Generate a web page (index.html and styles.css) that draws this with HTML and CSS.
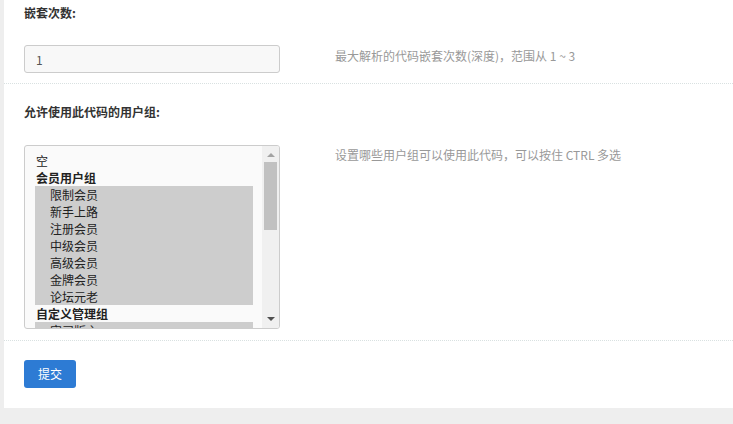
FILE: index.html
```html
<!DOCTYPE html>
<html lang="zh-CN">
<head>
<meta charset="utf-8">
<title>嵌套次数</title>
<link rel="stylesheet" href="styles.css">
</head>
<body>
<div class="panel">
  <div class="row row-first">
    <div class="label">嵌套次数:</div>
    <div class="field">
      <div class="control">
        <input class="input" type="text" value="1" readonly>
      </div>
      <div class="help">最大解析的代码嵌套次数(深度)，范围从 1 ~ 3</div>
    </div>
  </div>
  <div class="row row-second">
    <div class="label">允许使用此代码的用户组:</div>
    <div class="field">
      <div class="control">
        <div class="listbox">
          <div class="list-content">
            <div class="opt">空</div>
            <div class="group">会员用户组</div>
            <div class="opt sub sel">限制会员</div>
            <div class="opt sub sel">新手上路</div>
            <div class="opt sub sel">注册会员</div>
            <div class="opt sub sel">中级会员</div>
            <div class="opt sub sel">高级会员</div>
            <div class="opt sub sel">金牌会员</div>
            <div class="opt sub sel">论坛元老</div>
            <div class="group">自定义管理组</div>
            <div class="opt sub sel">实习版主</div>
          </div>
          <div class="scrollbar">
            <div class="arrow arrow-up"></div>
            <div class="track"><div class="thumb"></div></div>
            <div class="arrow arrow-down"></div>
          </div>
        </div>
      </div>
      <div class="help">设置哪些用户组可以使用此代码，可以按住 CTRL 多选</div>
    </div>
  </div>
  <div class="actions">
    <button class="btn" type="button">提交</button>
  </div>
</div>
</body>
</html>
```

FILE: styles.css
```css
html, body {
  margin: 0;
  padding: 0;
}
body {
  background: #eeeeee;
  font-family: "Microsoft YaHei", "Noto Sans CJK SC", "Noto Sans", sans-serif;
  font-size: 12px;
  color: #333;
  height: 424px;
  overflow: hidden;
}
.panel {
  margin-left: 4px;
  background: #ffffff;
  height: 408px;
}
.row {
  border-bottom: 1px dotted #d9e1e1;
  padding-left: 20px;
}
.row-first {
  padding-top: 3px;
  padding-bottom: 10px;
}
.row-second {
  padding-top: 18px;
  padding-bottom: 11px;
}
.label {
  font-weight: bold;
  line-height: 20px;
  color: #333;
}
.row-first .label {
  margin-bottom: 22px;
}
.row-second .label {
  margin-bottom: 23px;
}
.field {
  display: flex;
  align-items: flex-start;
}
.control {
  width: 256px;
  flex: none;
}
.help {
  margin-left: 55px;
  line-height: 20px;
  color: #999;
  padding-top: 1px;
}
.row-second .help {
  padding-top: 0;
}
.input {
  display: block;
  box-sizing: border-box;
  width: 256px;
  height: 28px;
  margin: 0;
  padding: 0 11px;
  border: 1px solid #cccccc;
  border-radius: 3px;
  background: #f8f8f8;
  font-family: inherit;
  font-size: 12px;
  color: #555;
  outline: none;
}
.listbox {
  box-sizing: border-box;
  width: 256px;
  height: 184px;
  border: 1px solid #cccccc;
  border-radius: 3px;
  background: #fafafa;
  display: flex;
  overflow: hidden;
}
.list-content {
  flex: 1;
  padding: 6px 9px 0 10px;
  overflow: hidden;
}
.opt, .group {
  height: 17px;
  line-height: 17px;
  white-space: nowrap;
  color: #222;
}
.group {
  font-weight: bold;
  padding-left: 1px;
}
.opt {
  padding-left: 1px;
}
.opt.sub {
  padding-left: 15px;
}
.opt.sel {
  background: #cdcdcd;
}
.scrollbar {
  width: 17px;
  flex: none;
  background: #f0f0f0;
  display: flex;
  flex-direction: column;
  align-items: center;
}
.arrow {
  width: 0;
  height: 0;
  border-left: 4px solid transparent;
  border-right: 4px solid transparent;
  flex: none;
}
.arrow-up {
  margin-top: 7px;
  border-bottom: 4px solid #a3a3a3;
}
.arrow-down {
  margin-bottom: 7px;
  border-top: 4px solid #505050;
}
.track {
  flex: 1;
  width: 13px;
  padding-top: 5px;
}
.thumb {
  width: 13px;
  height: 68px;
  background: #c1c1c1;
}
.actions {
  padding: 19px 20px 0 20px;
}
.btn {
  display: block;
  box-sizing: border-box;
  width: 52px;
  height: 28px;
  margin: 0;
  padding: 0;
  border: none;
  border-radius: 3px;
  background: #2d7bd4;
  color: #ffffff;
  font-family: inherit;
  font-size: 12px;
  line-height: 28px;
  text-align: center;
}
```
